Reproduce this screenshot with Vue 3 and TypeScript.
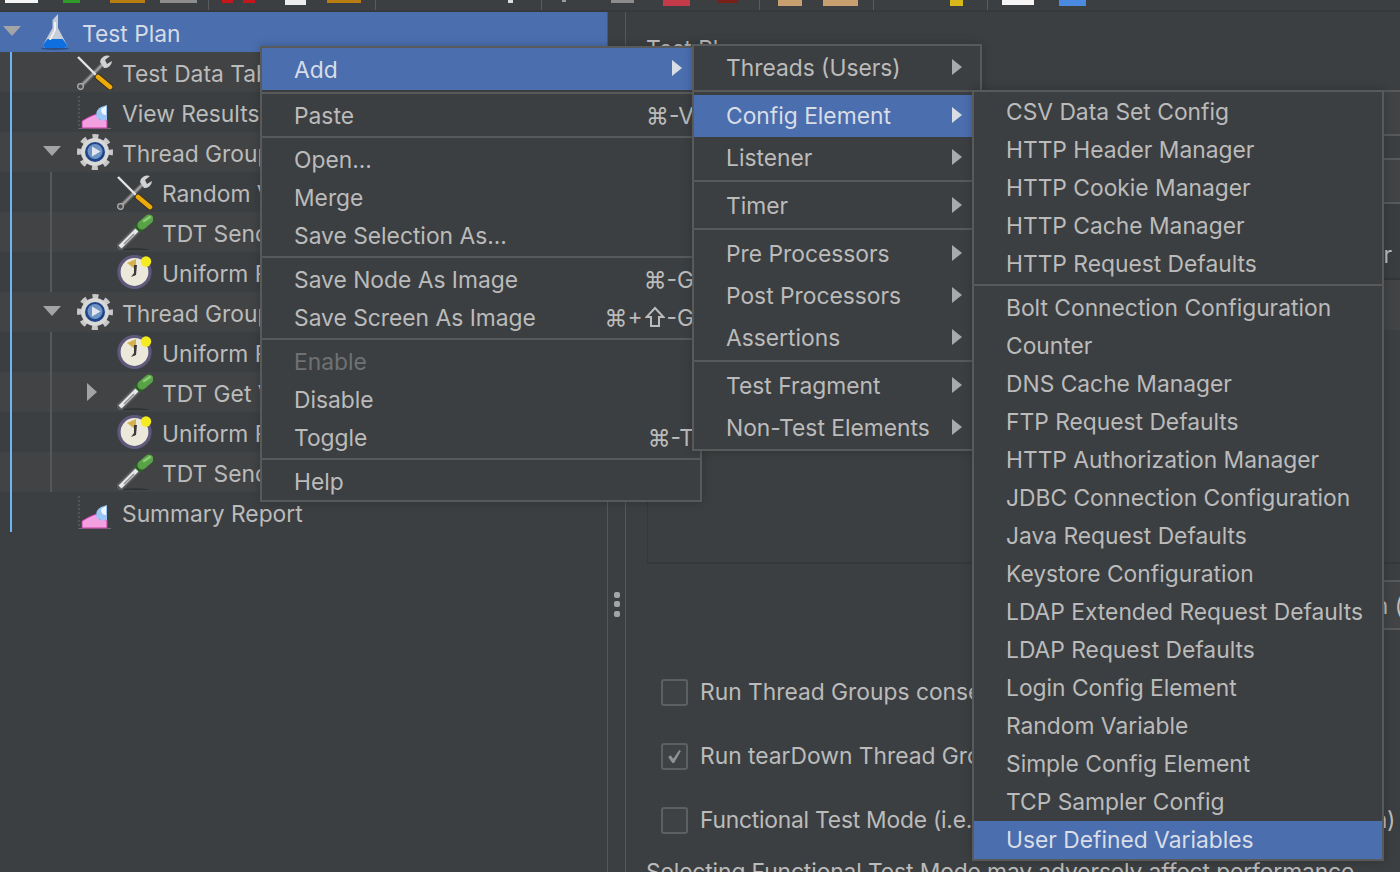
<script setup lang="ts">
type Kind = 'flask' | 'tools' | 'graph' | 'gear' | 'dropper' | 'clock'
interface Row { label: string; depth: number; icon: Kind; arrow?: 'down' | 'right'; selected?: boolean }
interface Item { label?: string; key?: string; sub?: boolean; active?: boolean; off?: boolean; sep?: boolean }

const rows: Row[] = [
  { label: 'Test Plan', depth: 0, icon: 'flask', arrow: 'down', selected: true },
  { label: 'Test Data Table Config', depth: 1, icon: 'tools' },
  { label: 'View Results Tree', depth: 1, icon: 'graph' },
  { label: 'Thread Group', depth: 1, icon: 'gear', arrow: 'down' },
  { label: 'Random Variable', depth: 2, icon: 'tools' },
  { label: 'TDT Send', depth: 2, icon: 'dropper' },
  { label: 'Uniform Random Timer', depth: 2, icon: 'clock' },
  { label: 'Thread Group', depth: 1, icon: 'gear', arrow: 'down' },
  { label: 'Uniform Random Timer', depth: 2, icon: 'clock' },
  { label: 'TDT Get Value', depth: 2, icon: 'dropper', arrow: 'right' },
  { label: 'Uniform Random Timer', depth: 2, icon: 'clock' },
  { label: 'TDT Send', depth: 2, icon: 'dropper' },
  { label: 'Summary Report', depth: 1, icon: 'graph' }
]

const main: Item[] = [
  { label: 'Add', sub: true, active: true },
  { sep: true },
  { label: 'Paste', key: '⌘-V' },
  { sep: true },
  { label: 'Open...' },
  { label: 'Merge' },
  { label: 'Save Selection As...' },
  { sep: true },
  { label: 'Save Node As Image', key: '⌘-G' },
  { label: 'Save Screen As Image', key: '⌘+⇧-G' },
  { sep: true },
  { label: 'Enable', off: true },
  { label: 'Disable' },
  { label: 'Toggle', key: '⌘-T' },
  { sep: true },
  { label: 'Help' }
]

const second: Item[] = [
  { label: 'Threads (Users)', sub: true },
  { sep: true },
  { label: 'Config Element', sub: true, active: true },
  { label: 'Listener', sub: true },
  { sep: true },
  { label: 'Timer', sub: true },
  { sep: true },
  { label: 'Pre Processors', sub: true },
  { label: 'Post Processors', sub: true },
  { label: 'Assertions', sub: true },
  { sep: true },
  { label: 'Test Fragment', sub: true },
  { label: 'Non-Test Elements', sub: true }
]

const third: Item[] = [
  { label: 'CSV Data Set Config' },
  { label: 'HTTP Header Manager' },
  { label: 'HTTP Cookie Manager' },
  { label: 'HTTP Cache Manager' },
  { label: 'HTTP Request Defaults' },
  { sep: true },
  { label: 'Bolt Connection Configuration' },
  { label: 'Counter' },
  { label: 'DNS Cache Manager' },
  { label: 'FTP Request Defaults' },
  { label: 'HTTP Authorization Manager' },
  { label: 'JDBC Connection Configuration' },
  { label: 'Java Request Defaults' },
  { label: 'Keystore Configuration' },
  { label: 'LDAP Extended Request Defaults' },
  { label: 'LDAP Request Defaults' },
  { label: 'Login Config Element' },
  { label: 'Random Variable' },
  { label: 'Simple Config Element' },
  { label: 'TCP Sampler Config' },
  { label: 'User Defined Variables', active: true }
]

const menus = [
  { cls: 'm1', items: main },
  { cls: 'm2', items: second },
  { cls: 'm3', items: third }
]

const tools: { x: number; w: number; c: string; h?: number }[] = [
  { x: 5, w: 33, c: '#f4f4f4', h: 3 },
  { x: 63, w: 17, c: '#2f9a2a', h: 3 },
  { x: 110, w: 35, c: '#b87c10', h: 3 },
  { x: 160, w: 37, c: '#8d8d8d', h: 3 },
  { x: 208, w: 1, c: '#5a5c5e', h: 10 },
  { x: 222, w: 11, c: '#c5161c', h: 3 },
  { x: 243, w: 12, c: '#c5161c', h: 3 },
  { x: 285, w: 21, c: '#ececec', h: 5 },
  { x: 327, w: 34, c: '#b87c10', h: 3 },
  { x: 375, w: 1, c: '#5a5c5e', h: 10 },
  { x: 508, w: 5, c: '#dddddd', h: 3 },
  { x: 541, w: 1, c: '#5a5c5e', h: 10 },
  { x: 562, w: 4, c: '#9c9c9c', h: 2 },
  { x: 611, w: 23, c: '#8c8c8c', h: 3 },
  { x: 663, w: 27, c: '#c43a48', h: 6 },
  { x: 718, w: 20, c: '#7a2018', h: 3 },
  { x: 759, w: 1, c: '#5a5c5e', h: 10 },
  { x: 778, w: 24, c: '#c8a070', h: 6 },
  { x: 823, w: 35, c: '#c8a070', h: 6 },
  { x: 873, w: 1, c: '#5a5c5e', h: 10 },
  { x: 950, w: 13, c: '#d8b81a', h: 6 },
  { x: 987, w: 1, c: '#5a5c5e', h: 10 },
  { x: 1002, w: 32, c: '#f6f6f6', h: 5 },
  { x: 1059, w: 27, c: '#4a8ae0', h: 6 }
]

function gap(i: number): string {
  const prev = i === 0 ? 0 : tools[i - 1].x + tools[i - 1].w
  return `${tools[i].x - prev}px`
}
</script>

<template>
  <div class="app">
    <div class="toolbar">
      <i
        v-for="(t, i) in tools"
        :key="t.x"
        class="tool"
        :style="{ marginLeft: gap(i), width: t.w + 'px', height: (t.h ?? 3) + 'px', background: t.c }"
      ></i>
    </div>

    <div class="body">
      <div class="tree">
        <div class="guide blue"></div>
        <div class="guide gray g1"></div>
        <div class="guide gray g2"></div>
        <div
          v-for="(r, i) in rows"
          :key="i"
          class="row"
          :class="['d' + r.depth, { sel: r.selected, alt: i % 2 === 1 }]"
        >
          <span class="slot"><i v-if="r.arrow" :class="'arrow-' + r.arrow"></i></span>
          <svg class="ico" viewBox="0 0 36 36">
            <template v-if="r.icon === 'flask'">
              <ellipse cx="18" cy="34.5" rx="14" ry="1.4" fill="#2d4f86" />
              <path d="M15.5 6 L21 0 V14 L29.5 30 Q31 34 27 34 H9 Q5 34 6.5 30 L15.5 14 Z" fill="#c6ccd8" />
              <path d="M10.5 25 H25.5 L29.5 30 Q31 34 27 34 H9 Q5 34 6.5 30 Z" fill="#0f6fe0" />
              <path d="M17 8 H19 V16 L14 26 H12 L17 16 Z" fill="#eef2f7" />
            </template>
            <template v-else-if="r.icon === 'tools'">
              <line x1="26" y1="10" x2="4" y2="32" stroke="#6d6d6d" stroke-width="4.5" />
              <line x1="26" y1="10" x2="5" y2="31" stroke="#a8a8a8" stroke-width="1.6" />
              <circle cx="3.5" cy="32.5" r="2.8" fill="#4c4c4c" stroke="#b5b5b5" stroke-width="1.2" />
              <path d="M23 8 A7.5 7.5 0 0 1 33 2 L28 6 L30 10 L35 7 A7.5 7.5 0 0 1 27 14 Z" fill="#d2d2d2" />
              <line x1="1" y1="3" x2="21" y2="23" stroke="#e2e2e2" stroke-width="2.4" />
              <line x1="21" y1="23" x2="33" y2="33" stroke="#3a3220" stroke-width="6.5" stroke-linecap="round" />
              <line x1="21" y1="23" x2="33" y2="33" stroke="#eeaa08" stroke-width="4.6" stroke-linecap="round" />
            </template>
            <template v-else-if="r.icon === 'graph'">
              <line x1="2" y1="2" x2="2" y2="35" stroke="#6b6d6f" stroke-width="1" stroke-dasharray="2 2" />
              <line x1="2" y1="34.5" x2="34" y2="34.5" stroke="#6b6d6f" stroke-width="1" />
              <path d="M5 34 V27 L12 23 L19 20 L22 25 L30 26 V34 Z" fill="#f3a0e0" stroke="#c43aa4" stroke-width="1" />
              <path d="M19 23 Q19 15 24 13 L30 11 V26 Q24 28 19 23 Z" fill="#9cc4f4" />
              <path d="M24 15 L29 12 V21 Q24 21 24 15 Z" fill="#eef6ff" />
            </template>
            <template v-else-if="r.icon === 'gear'">
              <circle cx="18" cy="18" r="15.5" fill="none" stroke="#c8c8c8" stroke-width="5" stroke-dasharray="6 6.17" stroke-dashoffset="3" />
              <circle cx="18" cy="18" r="14" fill="#d8d8d8" />
              <circle cx="18" cy="18" r="10" fill="#1c4688" />
              <circle cx="18" cy="17.5" r="7.5" fill="#6f94c4" />
              <path d="M15 12.5 L23.5 17.5 L15 22.5 Z" fill="#dfe6f0" />
            </template>
            <template v-else-if="r.icon === 'dropper'">
              <ellipse cx="18" cy="35.5" rx="14" ry="1.2" fill="#2e3032" />
              <line x1="22" y1="14" x2="1" y2="35" stroke="#5a5d5f" stroke-width="8" />
              <line x1="22" y1="14" x2="3" y2="33" stroke="#e8e8e8" stroke-width="4.2" />
              <line x1="17" y1="20" x2="7" y2="30" stroke="#8f9193" stroke-width="1.6" />
              <line x1="20" y1="16" x2="26" y2="10" stroke="#2f5f28" stroke-width="9" />
              <line x1="25" y1="11" x2="32" y2="5" stroke="#58a346" stroke-width="9" stroke-linecap="round" />
              <line x1="27" y1="7" x2="33" y2="3" stroke="#8ccc76" stroke-width="2.6" stroke-linecap="round" />
            </template>
            <template v-else>
              <circle cx="17.5" cy="18" r="15.5" fill="#ede9da" stroke="#5f5a7c" stroke-width="3.2" />
              <path d="M10 9 L19 5 L19 16 Z" fill="#d4b04e" />
              <path d="M17 11 L20 11 L19 21 L14 23 L17 19 Z" fill="#3a3a3a" />
              <circle cx="29" cy="7.5" r="5.2" fill="#f4ec1e" />
            </template>
          </svg>
          <span class="label">{{ r.label }}</span>
        </div>
      </div>

      <div class="split">
        <i></i><i></i><i></i>
      </div>

      <div class="pane">
        <div class="title">Test Plan</div>
        <div class="box">
          <div class="band b1"></div>
          <div class="band b2"></div>
          <div class="mid"><span>r</span></div>
          <div class="band b3"></div>
        </div>
        <div class="btnrow"><span>n (</span></div>
        <div class="check">
          <span class="cb"></span>
          <span class="cl">Run Thread Groups consecutively (i.e. one at a time)</span>
        </div>
        <div class="check">
          <span class="cb">
            <svg viewBox="0 0 27 27"><path d="M6 14 L9 12 L12 16 L19 6 L21 7 L13 21 L11 21 Z" fill="#8e9092" /></svg>
          </span>
          <span class="cl">Run tearDown Thread Groups after shutdown of main threads</span>
        </div>
        <div class="check">
          <span class="cb"></span>
          <span class="cl long">Functional Test Mode (i.e. save Response Data and Sampler Data)</span>
        </div>
        <div class="note">Selecting Functional Test Mode may adversely affect performance.</div>
      </div>
    </div>

    <div v-for="m in menus" :key="m.cls" class="menu" :class="m.cls">
      <template v-for="(it, i) in m.items" :key="i">
        <div v-if="it.sep" class="sep"></div>
        <div v-else class="item" :class="{ active: it.active, off: it.off }">
          <span class="txt">{{ it.label }}</span>
          <span v-if="it.key" class="key">
            <template v-for="(part, j) in it.key.split('⇧')" :key="j">
              <svg v-if="j > 0" class="shift" viewBox="0 0 20 22">
                <path d="M10 2 L18.5 11 H14 V20 H6 V11 H1.5 Z" fill="none" stroke="#bbbbbb" stroke-width="2" stroke-linejoin="miter" />
              </svg>
              <span>{{ part }}</span>
            </template>
          </span>
          <i v-if="it.sub" class="caret"></i>
        </div>
      </template>
    </div>
  </div>
</template>

<style>
html, body { margin: 0; overflow: hidden; background: #3c3f41; }
</style>

<style scoped>
.app {
  position: relative;
  width: 1400px;
  height: 872px;
  overflow: hidden;
  background: #3c3f41;
  color: #bbbbbb;
  font-family: Inter, "Liberation Sans", "DejaVu Sans", sans-serif;
  font-size: 22.8px;
}
.toolbar {
  display: flex;
  align-items: flex-start;
  height: 10px;
  border-bottom: 2px solid #37393b;
  overflow: hidden;
}
.tool { display: block; flex: none; }
.body { display: flex; height: 860px; }
.tree { position: relative; width: 607px; flex: none; }
.guide { position: absolute; width: 2px; }
.guide.blue { left: 10px; top: 40px; height: 480px; background: #6cb4f5; z-index: 1; }
.guide.gray { left: 50px; background: #55585a; z-index: 1; }
.g1 { top: 160px; height: 120px; }
.g2 { top: 320px; height: 160px; }
.row {
  display: flex;
  align-items: center;
  height: 40px;
  white-space: nowrap;
}
.row.alt { background: #414345; }
.row.sel { background: #4b6eaf; color: #d5dbe6; }
.d1 { padding-left: 40px; }
.d2 { padding-left: 80px; }
.slot {
  width: 24px;
  flex: none;
  display: flex;
  justify-content: center;
  align-items: center;
  margin-right: 13px;
}
.arrow-down {
  width: 0;
  height: 0;
  margin-top: -2px;
  border-left: 9px solid transparent;
  border-right: 9px solid transparent;
  border-top: 10px solid #a2a4a6;
}
.arrow-right {
  width: 0;
  height: 0;
  border-top: 9px solid transparent;
  border-bottom: 9px solid transparent;
  border-left: 10px solid #a2a4a6;
}
.ico { width: 36px; height: 36px; flex: none; filter: blur(0.35px); }
.label { margin: 2px 0 0 9px; }
.split {
  width: 17px;
  flex: none;
  border-left: 1px solid #555759;
  border-right: 1px solid #555759;
  display: flex;
  flex-direction: column;
  align-items: center;
  justify-content: center;
  gap: 3.5px;
  padding-top: 324px;
  box-sizing: content-box;
  height: 536px;
}
.split i { width: 6px; height: 6px; border-radius: 2px; background: #a4a4a4; }
.pane { flex: 1; min-width: 0; white-space: nowrap; }
.title { margin: 25px 0 0 20px; line-height: 24px; height: 53px; }
.box {
  margin-left: 21px;
  height: 474px;
  border-left: 1px solid #35373a;
  border-bottom: 2px solid #35373a;
  box-sizing: border-box;
}
.band { background: #414345; border-top: 2px solid #58595b; border-bottom: 2px solid #58595b; }
.b1 { height: 42px; margin-bottom: 22px; }
.b2 { height: 42px; }
.mid {
  height: 76px;
  background: #3a3d3f;
  border-bottom: 2px solid #333537;
  box-sizing: border-box;
  display: flex;
  justify-content: flex-end;
  align-items: flex-end;
  padding: 0 8px 10px 0;
}
.band.b3 { height: 50px; border: none; }
.btnrow {
  margin: 16px -3px 0 auto;
  width: 240px;
  height: 46px;
  background: #414345;
  border-top: 2px solid #58595b;
  border-bottom: 2px solid #58595b;
  display: flex;
  align-items: center;
  justify-content: flex-end;
}
.check {
  display: flex;
  align-items: center;
  height: 64px;
  padding-left: 35px;
  gap: 12px;
}
.btnrow + .check { margin-top: 30px; }
.cb {
  width: 27px;
  height: 27px;
  flex: none;
  box-sizing: border-box;
  border: 2px solid #5d6062;
  border-radius: 3px;
  background: #3f4244;
  display: block;
  overflow: hidden;
}
.cb svg { display: block; width: 23px; height: 23px; }
.cl { margin-top: -2px; }
.long { letter-spacing: -0.22px; }
.note { margin: 8px 0 0 20px; line-height: 24px; letter-spacing: -0.1px; }
.menu {
  position: absolute;
  box-sizing: border-box;
  background: #3c3f41;
  border: 2px solid #58595b;
  box-shadow: 0 0 9px rgba(0, 0, 0, 0.22);
  overflow: hidden;
  white-space: nowrap;
}
.m1 { left: 260px; top: 46px; width: 442px; height: 456px; z-index: 2; }
.m2 { left: 692px; top: 44px; width: 290px; height: 407px; padding-top: 1px; z-index: 3; }
.m3 { left: 972px; top: 90px; width: 412px; height: 771px; padding-top: 1px; z-index: 4; }
.item {
  position: relative;
  display: flex;
  align-items: center;
  justify-content: space-between;
  padding: 0 6px 0 32px;
  height: 38px;
}
.txt, .key { margin-top: -2px; }
.m1 .item:first-child .txt { margin-top: 0; }
.m2 .item { height: 42px; }
.m1 .item:first-child { height: 42px; }
.m1 .sep:nth-child(2) { margin-top: 1px; }
.sep { height: 6px; box-sizing: border-box; padding-top: 1px; }
.sep::before { content: ""; display: block; height: 2px; background: #58595b; }
.item.active { background: #4b6eaf; color: #d8dde6; }
.item.off { color: #6f7173; }
.key { display: flex; align-items: center; margin-right: 0; }
.shift { width: 20px; height: 22px; margin: 0 2px; }
.caret {
  position: absolute;
  right: 18px;
  top: 50%;
  margin-top: -9px;
  width: 0;
  height: 0;
  border-top: 8px solid transparent;
  border-bottom: 8px solid transparent;
  border-left: 10px solid #a8aaac;
}
.active .caret { border-left-color: #d8dde6; }
</style>
